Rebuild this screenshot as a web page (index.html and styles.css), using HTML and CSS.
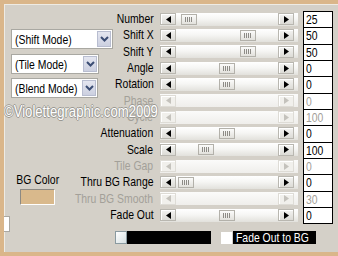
FILE: index.html
```html
<!DOCTYPE html>
<html lang="en">
<head>
  <meta charset="UTF-8">
  <title>Kaleidoscope</title>
  <link rel="stylesheet" href="styles.css">
</head>
<body>
  <div class="frame">
    <div class="panel">
      <div class="modes">
        <div class="combo shift"><span class="comboText"><span class="narrow">(Shift Mode)</span></span><span class="comboBtn"><svg width="9" height="6" viewBox="0 0 9 6"><path d="M1 1 L4.5 4.5 L8 1" fill="none" stroke="#3b4d74" stroke-width="2"/></svg></span></div>
        <div class="combo tile"><span class="comboText"><span class="narrow">(Tile Mode)</span></span><span class="comboBtn"><svg width="9" height="6" viewBox="0 0 9 6"><path d="M1 1 L4.5 4.5 L8 1" fill="none" stroke="#3b4d74" stroke-width="2"/></svg></span></div>
        <div class="combo blend"><span class="comboText"><span class="narrow">(Blend Mode)</span></span><span class="comboBtn"><svg width="9" height="6" viewBox="0 0 9 6"><path d="M1 1 L4.5 4.5 L8 1" fill="none" stroke="#3b4d74" stroke-width="2"/></svg></span></div>
      </div>

      <div class="bgColor">
        <span class="bgLabel">BG Color</span>
        <div class="swatch"></div>
      </div>
      <div class="stub"></div>

      <span class="label">Number</span>
      <div class="slider"><span class="arrowBtn"><svg width="5" height="7" viewBox="0 0 5 7"><polygon points="5,0 0,3.5 5,7" fill="#000"/></svg></span><span class="thumb" style="margin-left:5px"><i></i></span><span class="arrowBtn right"><svg width="5" height="7" viewBox="0 0 5 7"><polygon points="0,0 5,3.5 0,7" fill="#000"/></svg></span></div>
      <span class="value"><span class="narrow">25</span></span>

      <span class="label">Shift X</span>
      <div class="slider"><span class="arrowBtn"><svg width="5" height="7" viewBox="0 0 5 7"><polygon points="5,0 0,3.5 5,7" fill="#000"/></svg></span><span class="thumb" style="margin-left:64px"><i></i></span><span class="arrowBtn right"><svg width="5" height="7" viewBox="0 0 5 7"><polygon points="0,0 5,3.5 0,7" fill="#000"/></svg></span></div>
      <span class="value"><span class="narrow">50</span></span>

      <span class="label">Shift Y</span>
      <div class="slider"><span class="arrowBtn"><svg width="5" height="7" viewBox="0 0 5 7"><polygon points="5,0 0,3.5 5,7" fill="#000"/></svg></span><span class="thumb" style="margin-left:64px"><i></i></span><span class="arrowBtn right"><svg width="5" height="7" viewBox="0 0 5 7"><polygon points="0,0 5,3.5 0,7" fill="#000"/></svg></span></div>
      <span class="value"><span class="narrow">50</span></span>

      <span class="label">Angle</span>
      <div class="slider"><span class="arrowBtn"><svg width="5" height="7" viewBox="0 0 5 7"><polygon points="5,0 0,3.5 5,7" fill="#000"/></svg></span><span class="thumb" style="margin-left:43px"><i></i></span><span class="arrowBtn right"><svg width="5" height="7" viewBox="0 0 5 7"><polygon points="0,0 5,3.5 0,7" fill="#000"/></svg></span></div>
      <span class="value"><span class="narrow">0</span></span>

      <span class="label">Rotation</span>
      <div class="slider"><span class="arrowBtn"><svg width="5" height="7" viewBox="0 0 5 7"><polygon points="5,0 0,3.5 5,7" fill="#000"/></svg></span><span class="thumb" style="margin-left:43px"><i></i></span><span class="arrowBtn right"><svg width="5" height="7" viewBox="0 0 5 7"><polygon points="0,0 5,3.5 0,7" fill="#000"/></svg></span></div>
      <span class="value"><span class="narrow">0</span></span>

      <span class="label off">Phase</span>
      <div class="slider off"><span class="arrowBtn"><svg width="5" height="7" viewBox="0 0 5 7"><polygon points="5,0 0,3.5 5,7" fill="#c4c2bc"/></svg></span><span class="arrowBtn right"><svg width="5" height="7" viewBox="0 0 5 7"><polygon points="0,0 5,3.5 0,7" fill="#c4c2bc"/></svg></span></div>
      <span class="value off"><span class="narrow">0</span></span>

      <span class="label off">Cycle</span>
      <div class="slider off"><span class="arrowBtn"><svg width="5" height="7" viewBox="0 0 5 7"><polygon points="5,0 0,3.5 5,7" fill="#c4c2bc"/></svg></span><span class="arrowBtn right"><svg width="5" height="7" viewBox="0 0 5 7"><polygon points="0,0 5,3.5 0,7" fill="#c4c2bc"/></svg></span></div>
      <span class="value off"><span class="narrow">100</span></span>

      <span class="label">Attenuation</span>
      <div class="slider"><span class="arrowBtn"><svg width="5" height="7" viewBox="0 0 5 7"><polygon points="5,0 0,3.5 5,7" fill="#000"/></svg></span><span class="thumb" style="margin-left:43px"><i></i></span><span class="arrowBtn right"><svg width="5" height="7" viewBox="0 0 5 7"><polygon points="0,0 5,3.5 0,7" fill="#000"/></svg></span></div>
      <span class="value"><span class="narrow">0</span></span>

      <span class="label">Scale</span>
      <div class="slider"><span class="arrowBtn"><svg width="5" height="7" viewBox="0 0 5 7"><polygon points="5,0 0,3.5 5,7" fill="#000"/></svg></span><span class="thumb" style="margin-left:22px"><i></i></span><span class="arrowBtn right"><svg width="5" height="7" viewBox="0 0 5 7"><polygon points="0,0 5,3.5 0,7" fill="#000"/></svg></span></div>
      <span class="value"><span class="narrow">100</span></span>

      <span class="label off">Tile Gap</span>
      <div class="slider off"><span class="arrowBtn"><svg width="5" height="7" viewBox="0 0 5 7"><polygon points="5,0 0,3.5 5,7" fill="#c4c2bc"/></svg></span><span class="arrowBtn right"><svg width="5" height="7" viewBox="0 0 5 7"><polygon points="0,0 5,3.5 0,7" fill="#c4c2bc"/></svg></span></div>
      <span class="value off"><span class="narrow">0</span></span>

      <span class="label">Thru BG Range</span>
      <div class="slider"><span class="arrowBtn"><svg width="5" height="7" viewBox="0 0 5 7"><polygon points="5,0 0,3.5 5,7" fill="#000"/></svg></span><span class="thumb" style="margin-left:2px"><i></i></span><span class="arrowBtn right"><svg width="5" height="7" viewBox="0 0 5 7"><polygon points="0,0 5,3.5 0,7" fill="#000"/></svg></span></div>
      <span class="value"><span class="narrow">0</span></span>

      <span class="label off">Thru BG Smooth</span>
      <div class="slider off"><span class="arrowBtn"><svg width="5" height="7" viewBox="0 0 5 7"><polygon points="5,0 0,3.5 5,7" fill="#c4c2bc"/></svg></span><span class="arrowBtn right"><svg width="5" height="7" viewBox="0 0 5 7"><polygon points="0,0 5,3.5 0,7" fill="#c4c2bc"/></svg></span></div>
      <span class="value off"><span class="narrow">30</span></span>

      <span class="label">Fade Out</span>
      <div class="slider"><span class="arrowBtn"><svg width="5" height="7" viewBox="0 0 5 7"><polygon points="5,0 0,3.5 5,7" fill="#000"/></svg></span><span class="thumb" style="margin-left:43px"><i></i></span><span class="arrowBtn right"><svg width="5" height="7" viewBox="0 0 5 7"><polygon points="0,0 5,3.5 0,7" fill="#000"/></svg></span></div>
      <span class="value last"><span class="narrow">0</span></span>
    </div>

    <div class="footer">
      <div class="fillBar"><span class="fillSwatch"></span></div>
      <span class="check"></span>
      <span class="fadeLabel"><span class="narrow">Fade Out to BG</span></span>
    </div>

    <div class="watermark">©Violettegraphic.com2009</div>
  </div>
</body>
</html>
```

FILE: styles.css
```css
body {
  margin: 0;
  background: #d4d0c8;
  font-family: "Liberation Sans", Arial, sans-serif;
  font-size: 13px;
}
/* Arial squeezed to the width of the old narrow UI font */
.narrow {
  display: inline-block;
  white-space: nowrap;
  transform: scaleX(0.8);
  transform-origin: left center;
}
.frame {
  position: relative;
  width: 338px;
  height: 256px;
  box-sizing: border-box;
  border-top: 4px solid #dab68a;
  border-left: 4px solid #dab68a;
  border-bottom: 4px solid #dab68a;
  background: #d4d0c8;
  box-shadow: inset 1px 1px 0 #eeebe4;
  overflow: hidden;
}
.panel {
  display: grid;
  grid-template-columns: 65px 81px 138px 30px;
  grid-template-rows: repeat(13, 16.33px);
  column-gap: 5px;
  padding-top: 7px;
}
.label {
  grid-column: 2;
  justify-self: end;
  align-self: center;
  white-space: nowrap;
  padding-right: 2px;
  line-height: 16px;
  color: #000;
  transform: scaleX(0.8);
  transform-origin: right center;
}
.label.off {
  color: #a3a099;
}
.slider {
  grid-column: 3;
  align-self: center;
  height: 13px;
  display: flex;
  align-items: center;
  background: linear-gradient(#ffffff, #f6f6f4 45%, #e2e1dc);
}
.slider.off {
  background: linear-gradient(#fbfbfa, #efeeeb);
}
.arrowBtn {
  width: 16px;
  height: 12px;
  box-sizing: border-box;
  display: flex;
  align-items: center;
  justify-content: center;
  background: linear-gradient(#f4f4f2, #dcdbd6);
  border: 1px solid #b9b7b0;
  box-shadow: inset 1px 1px 0 #fff;
}
.slider.off .arrowBtn {
  background: #f1f0ec;
  border-color: #dedcd6;
}
.arrowBtn.right {
  margin-left: auto;
  margin-right: 4px;
}
.thumb {
  width: 16px;
  height: 11px;
  box-sizing: border-box;
  display: flex;
  align-items: center;
  justify-content: center;
  background: linear-gradient(#fbfbfa, #e2e1dc);
  border: 1px solid #b3b1aa;
}
.thumb i {
  width: 8px;
  height: 5px;
  background: repeating-linear-gradient(90deg, #8d8b86 0 1px, transparent 1px 2px);
}
.value {
  grid-column: 4;
  box-sizing: border-box;
  background: #fff;
  border: 1px solid #000;
  border-bottom: none;
  padding-left: 2px;
  line-height: 15px;
  color: #000;
}
.value.off {
  color: #a3a099;
}
.value.last {
  border-bottom: 1px solid #000;
  height: 17px;
}

.modes {
  grid-column: 1;
  grid-row: 2 / span 5;
  align-self: start;
  margin-top: 2px;
  margin-left: 7px;
  display: flex;
  flex-direction: column;
}
.combo {
  height: 20px;
  box-sizing: border-box;
  display: flex;
  align-items: center;
  background: #fff;
  border: 1px solid #a9a8a2;
  padding: 1px;
}
.combo.shift { width: 102px; }
.combo.tile { width: 88px; margin-top: 5px; }
.combo.blend { width: 87px; margin-top: 4px; }
.comboText {
  flex: 1;
  min-width: 0;
  padding-left: 2px;
  white-space: nowrap;
}
.comboBtn {
  width: 14px;
  height: 16px;
  box-sizing: border-box;
  display: flex;
  align-items: center;
  justify-content: center;
  background: linear-gradient(#e4e6f0, #ccd0e0);
  border: 1px solid #b8bdd0;
}

.bgColor {
  grid-column: 1;
  grid-row: 10 / span 4;
  align-self: start;
  justify-self: start;
  margin-top: 14px;
  margin-left: 13px;
  width: 42px;
  display: flex;
  flex-direction: column;
  align-items: center;
  line-height: 16px;
}
.bgLabel {
  white-space: nowrap;
  transform: scaleX(0.8);
}
.swatch {
  width: 35px;
  height: 16px;
  box-sizing: border-box;
  margin-top: 1px;
  margin-right: 2px;
  background: #d9b98c;
  border: 1px solid;
  border-color: #8c8983 #fff #fff #8c8983;
}
.stub {
  grid-column: 1;
  grid-row: 13;
  align-self: start;
  justify-self: start;
  margin-top: 9px;
  margin-left: -4px;
  width: 10px;
  height: 16px;
  box-sizing: border-box;
  background: #fff;
  border: 1px solid #aaa8a2;
  border-left: none;
}

.footer {
  display: flex;
  align-items: center;
  margin-top: 8px;
  margin-left: 111px;
}
.fillBar {
  width: 96px;
  height: 13px;
  background: #000;
  display: flex;
}
.fillSwatch {
  width: 12px;
  height: 13px;
  box-sizing: border-box;
  background: linear-gradient(135deg, #ffffff, #d6e0e2);
  border: 1px solid #8a9aa0;
}
.check {
  width: 11px;
  height: 12px;
  margin-left: 10px;
  background: #fff;
}
.fadeLabel {
  margin-left: 1px;
  width: 83px;
  height: 13px;
  box-sizing: border-box;
  padding-left: 3px;
  background: #000;
  color: #fff;
  line-height: 13px;
  white-space: nowrap;
}

.watermark {
  position: absolute;
  left: 0;
  top: 100px;
  font-size: 16px;
  line-height: 16px;
  color: #fff;
  white-space: nowrap;
  transform: scaleX(0.82);
  transform-origin: left center;
  text-shadow: 1px 0 0 #9a9892, -1px 0 0 #9a9892, 0 1px 0 #9a9892, 0 -1px 0 #9a9892;
}
```
